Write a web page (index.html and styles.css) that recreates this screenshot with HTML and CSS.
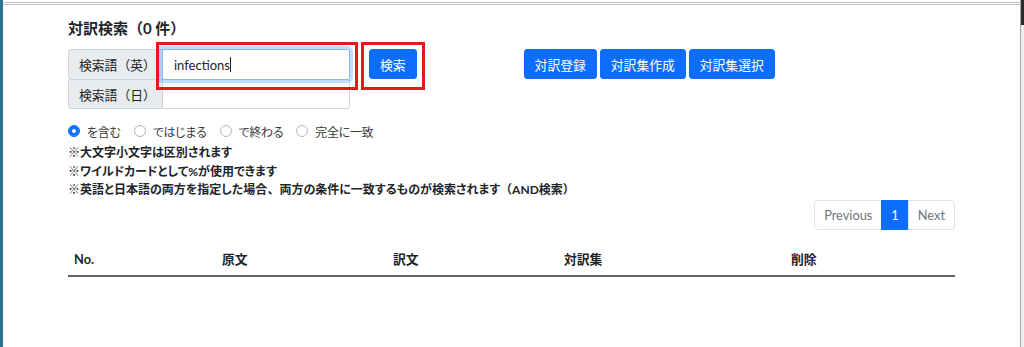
FILE: index.html
```html
<!DOCTYPE html>
<html lang="ja">
<head>
    <meta charset="UTF-8">
    <meta name="viewport" content="width=device-width, initial-scale=1.0">
    <title>対訳検索</title>
    <link rel="stylesheet" href="styles.css">
</head>
<body>
    <div class="screen">
        <div class="edge-left"></div>

        <div class="window">
            <div class="page">
                <h5 class="title">対訳検索（0 件）</h5>

                <div class="search-row">
                    <div class="search-fields">
                        <div class="input-group">
                            <span class="group-label">検索語（英）</span>
                            <div class="field is-focused">infections<span class="caret"></span></div>
                        </div>
                        <div class="input-group">
                            <span class="group-label">検索語（日）</span>
                            <div class="field"></div>
                        </div>
                        <span class="mark mark-fields"></span>
                    </div>

                    <div class="search-submit">
                        <button type="button" class="btn">検索</button>
                        <span class="mark mark-submit"></span>
                    </div>

                    <div class="actions">
                        <button type="button" class="btn">対訳登録</button>
                        <button type="button" class="btn">対訳集作成</button>
                        <button type="button" class="btn">対訳集選択</button>
                    </div>
                </div>

                <div class="match-options">
                    <label class="option"><input type="radio" name="match" checked> を含む</label>
                    <label class="option"><input type="radio" name="match"> ではじまる</label>
                    <label class="option"><input type="radio" name="match"> で終わる</label>
                    <label class="option"><input type="radio" name="match"> 完全に一致</label>
                </div>

                <ul class="notes">
                    <li>※大文字小文字は区別されます</li>
                    <li>※ワイルドカードとして%が使用できます</li>
                    <li>※英語と日本語の両方を指定した場合<span class="fw">、</span>両方の条件に一致するものが検索されます<span class="fw">（</span>AND検索<span class="fw">）</span></li>
                </ul>

                <nav class="pager">
                    <span class="page-item">Previous</span>
                    <span class="page-item active">1</span>
                    <span class="page-item">Next</span>
                </nav>

                <table class="results">
                    <thead>
                        <tr>
                            <th class="col-no">No.</th>
                            <th class="col-src">原文</th>
                            <th class="col-dst">訳文</th>
                            <th class="col-set">対訳集</th>
                            <th class="col-del">削除</th>
                        </tr>
                    </thead>
                    <tbody></tbody>
                </table>
            </div>
        </div>

        <div class="edge-right"></div>
    </div>
</body>
</html>
```

FILE: styles.css
```css
* {
    margin: 0;
    padding: 0;
    box-sizing: border-box;
}

body {
    font-family: 'Lato', 'Noto Sans CJK JP', sans-serif;
    font-size: 12.8px;
    color: #212529;
    background: #ffffff;
    overflow: hidden;
}

/* Window frame */
.screen {
    display: flex;
    height: 347px;
}

.edge-left {
    width: 3px;
    background: #2d7190;
}

.edge-right {
    width: 4px;
    background: linear-gradient(#2b2b2b 0, #2b2b2b 25px, #eeeeee 25px);
    border-left: 1px solid #a8a8a8;
}

.window {
    flex: 1;
    padding-top: 2px;
}

.page {
    border-top: 3px double #c4c4c4;
    padding: 13px 65px 0;
}

/* Title */
.title {
    font-size: 15px;
    font-weight: 700;
    line-height: 20px;
    margin-bottom: 11px;
}

/* Search row */
.search-row {
    display: flex;
    align-items: flex-start;
}

.search-fields {
    position: relative;
}

.input-group {
    display: flex;
    height: 31px;
}

.input-group + .input-group {
    margin-top: -1px;
    height: 30px;
}

.group-label {
    width: 95px;
    display: flex;
    align-items: center;
    padding: 0 10px;
    background: #e9ecef;
    border: 1px solid #ced4da;
    border-radius: 3px 0 0 3px;
    color: #212529;
    white-space: nowrap;
}

.field {
    width: 188px;
    display: flex;
    align-items: center;
    padding: 0 11px;
    margin-left: -1px;
    background: #fff;
    border: 1px solid #ced4da;
    border-radius: 0 3px 3px 0;
    font-size: 13px;
}

.field.is-focused {
    border-color: #86b7fe;
    box-shadow: 0 0 0 3px rgba(13, 110, 253, 0.25);
    position: relative;
    z-index: 1;
}

.caret {
    display: inline-block;
    width: 1px;
    height: 15px;
    background: #212529;
}

/* Red annotation frames */
.mark {
    position: absolute;
    border: 3px solid #e3191c;
    pointer-events: none;
    z-index: 2;
}

.mark-fields {
    left: 88px;
    top: -7px;
    width: 202px;
    height: 48px;
}

.mark-submit {
    left: -8px;
    top: -7px;
    width: 64px;
    height: 48px;
}

.search-submit {
    position: relative;
    margin-left: 19px;
}

.btn {
    height: 30px;
    padding: 0 10px;
    background: #0d6efd;
    border: 1px solid #0d6efd;
    border-radius: 3px;
    color: #fff;
    font-family: inherit;
    font-size: 12.8px;
}

.actions {
    display: flex;
    gap: 3px;
    margin-left: 107px;
}

/* Match options */
.match-options {
    display: flex;
    align-items: center;
    height: 20px;
    margin-top: 12px;
    color: #3a3a3a;
    font-size: 12px;
    font-feature-settings: "palt";
}

.option {
    display: flex;
    align-items: center;
    gap: 7px;
    margin-right: 13px;
    letter-spacing: -0.3px;
}

.option input {
    appearance: none;
    width: 12px;
    height: 12px;
    border: 1px solid #b5b5b5;
    border-radius: 50%;
    background: #fff;
    margin: 0;
}

.option input:checked {
    background: #0d6efd;
    border-color: #0d6efd;
    box-shadow: inset 0 0 0 3px #0d6efd, inset 0 0 0 6px #fff;
}

/* Notes */
.notes {
    list-style: none;
    margin-top: 3px;
    font-size: 12px;
    font-weight: 700;
    line-height: 18.5px;
    font-feature-settings: "palt";
}

.notes .fw {
    font-feature-settings: normal;
}

/* Pagination */
.pager {
    display: flex;
    justify-content: flex-end;
}

.page-item {
    height: 30px;
    display: flex;
    align-items: center;
    padding: 0 9px;
    border: 1px solid #dee2e6;
    margin-left: -1px;
    color: #6c757d;
}

.page-item:first-child {
    border-radius: 4px 0 0 4px;
}

.page-item:last-child {
    border-radius: 0 4px 4px 0;
}

.page-item.active {
    background: #0d6efd;
    border-color: #0d6efd;
    color: #fff;
}

/* Results table */
.results {
    width: 887px;
    margin-top: 14px;
    border-collapse: collapse;
}

.results th {
    text-align: left;
    font-weight: 700;
    line-height: 19px;
    padding: 6px;
    border-bottom: 2px solid #5f6366;
}

.col-no { width: 148px; }
.col-src { width: 171px; }
.col-dst { width: 171px; }
.col-set { width: 227px; }
.col-del { width: 170px; }
```
